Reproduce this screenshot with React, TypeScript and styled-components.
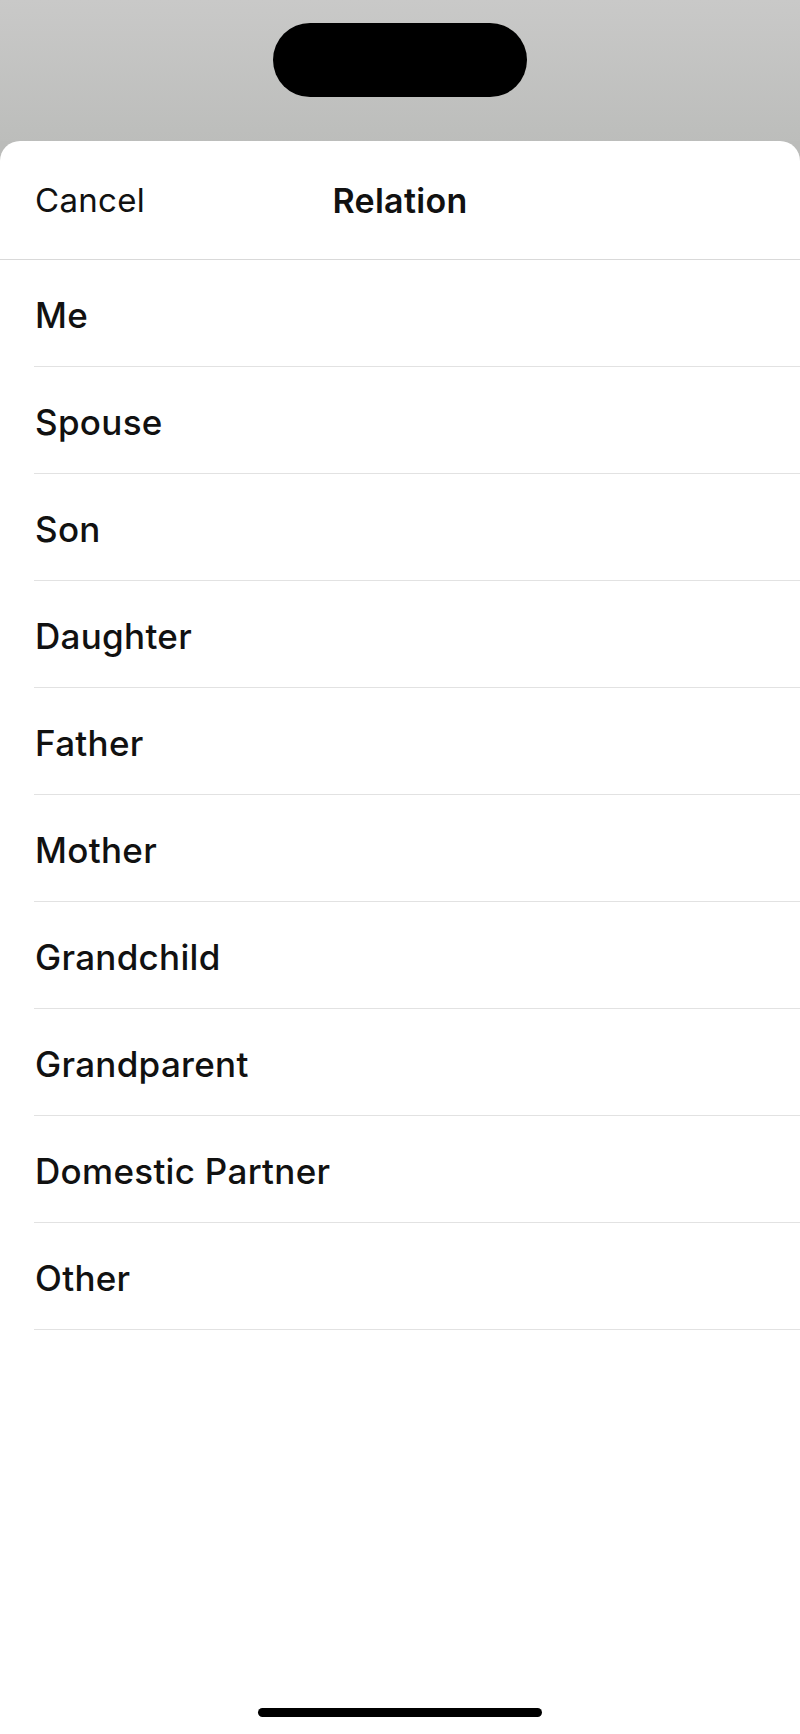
import React from 'react';
import styled, { createGlobalStyle } from 'styled-components';

const GlobalStyle = createGlobalStyle`
  html, body {
    margin: 0;
    padding: 0;
  }
  body {
    background: #ffffff;
    font-family: Inter, "Noto Sans", "Liberation Sans", sans-serif;
    -webkit-font-smoothing: antialiased;
  }
`;

const Screen = styled.div`
  width: 800px;
  height: 1734px;
  display: flex;
  flex-direction: column;
  overflow: hidden;
  background: #bbbcba;
`;

const StatusArea = styled.div`
  height: 141px;
  flex-shrink: 0;
  display: flex;
  justify-content: center;
  padding-top: 23px;
  box-sizing: border-box;
  background: linear-gradient(180deg, #c9c9c8 0%, #bcbdbb 100%);
`;

const Island = styled.div`
  width: 254px;
  height: 74px;
  border-radius: 37px;
  background: #000;
`;

const Sheet = styled.div`
  flex: 1;
  background: #fff;
  border-radius: 20px 20px 0 0;
  display: flex;
  flex-direction: column;
`;

const Header = styled.div`
  height: 119px;
  flex-shrink: 0;
  position: relative;
  display: flex;
  align-items: center;
  justify-content: center;
  border-bottom: 1.5px solid #d9d9d9;
  box-sizing: border-box;
`;

const CancelButton = styled.button`
  position: absolute;
  left: 35px;
  top: 50%;
  transform: translateY(-50%);
  background: none;
  border: none;
  padding: 0;
  font-family: inherit;
  font-size: 33px;
  font-weight: 400;
  color: #111;
  letter-spacing: 0.3px;
  cursor: pointer;
`;

const Title = styled.h1`
  margin: 0;
  font-size: 34px;
  font-weight: 600;
  color: #111;
  letter-spacing: 0.3px;
`;

const List = styled.ul`
  list-style: none;
  margin: 0;
  padding: 0 0 0 34px;
`;

const Row = styled.li`
  height: 107px;
  display: flex;
  align-items: center;
  padding-top: 4px;
  padding-left: 1px;
  box-sizing: border-box;
  border-bottom: 1.5px solid #e2e2e2;
  font-size: 35px;
  font-weight: 500;
  color: #111;
  letter-spacing: 0.3px;
`;

const Spacer = styled.div`
  flex: 1;
`;

const HomeBar = styled.div`
  align-self: center;
  width: 284px;
  height: 9px;
  border-radius: 5px;
  background: #000;
  margin-bottom: 17px;
`;

const relations = [
  'Me',
  'Spouse',
  'Son',
  'Daughter',
  'Father',
  'Mother',
  'Grandchild',
  'Grandparent',
  'Domestic Partner',
  'Other',
];

export default function App() {
  return (
    <>
      <GlobalStyle />
      <Screen>
        <StatusArea>
          <Island />
        </StatusArea>
        <Sheet>
          <Header>
            <CancelButton>Cancel</CancelButton>
            <Title>Relation</Title>
          </Header>
          <List>
            {relations.map((r) => (
              <Row key={r}>{r}</Row>
            ))}
          </List>
          <Spacer />
          <HomeBar />
        </Sheet>
      </Screen>
    </>
  );
}
